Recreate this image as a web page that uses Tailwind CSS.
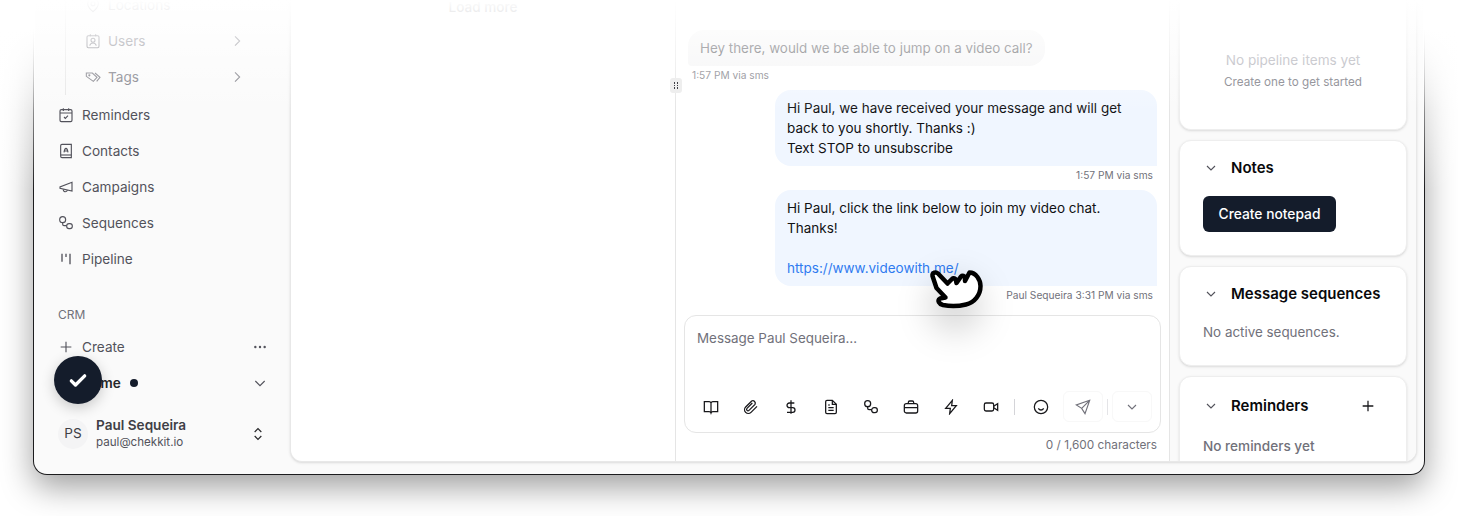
<!DOCTYPE html>
<html lang="en">
<head>
  <meta charset="UTF-8" />
  <title>Chekkit inbox</title>
  <script src="https://cdn.jsdelivr.net/npm/@tailwindcss/browser@4"></script>
</head>
<body class="bg-white">
<div class="relative h-[516px] w-[1458px] overflow-hidden bg-white font-['Inter',sans-serif] text-[13.6px]">

  <!-- app window -->
  <div class="relative ml-[33px] flex h-[475px] w-[1392px] overflow-hidden rounded-b-[14px] border border-t-0 border-[#1c1c1e] bg-[#fafafa] shadow-[0_12px_32px_rgba(0,0,0,0.38)]">

    <!-- sidebar -->
    <aside class="relative -mt-[13px] flex h-[488px] w-[256px] shrink-0 flex-col pl-[24px] pr-[22px] text-[#52525b]">
      <div class="ml-[7px] border-l border-[#e5e5e5] pl-[19px]">
        <div class="flex h-9 items-center gap-[7px] pr-[25px] text-[#71717a]">
          <svg class="size-4" viewBox="0 0 24 24" fill="none" stroke="currentColor" stroke-width="1.6"><path d="M20 10c0 5-8 12-8 12s-8-7-8-12a8 8 0 0 1 16 0Z"/><circle cx="12" cy="10" r="3"/></svg>
          <span>Locations</span>
        </div>
        <div class="flex h-9 items-center gap-[7px] pr-[23px] text-[#71717a]">
          <svg class="size-4" viewBox="0 0 24 24" fill="none" stroke="currentColor" stroke-width="1.6"><rect x="3" y="4" width="18" height="18" rx="2"/><path d="M8 2v3M16 2v3"/><circle cx="12" cy="11" r="3"/><path d="M7 19c1-3 3-4 5-4s4 1 5 4"/></svg>
          <span class="flex-1">Users</span>
          <svg class="size-4" viewBox="0 0 24 24" fill="none" stroke="currentColor" stroke-width="1.6"><path d="m9 5 7 7-7 7"/></svg>
        </div>
        <div class="flex h-9 items-center gap-[7px] pr-[23px] text-[#71717a]">
          <svg class="size-4" viewBox="0 0 24 24" fill="none" stroke="currentColor" stroke-width="1.6"><path d="M2 6h9l7 6.500-5.500 6L2 11Z"/><path d="m15 6 7.500 6.500-5 6"/><circle cx="6.500" cy="9.500" r="0.8"/></svg>
          <span class="flex-1">Tags</span>
          <svg class="size-4" viewBox="0 0 24 24" fill="none" stroke="currentColor" stroke-width="1.6"><path d="m9 5 7 7-7 7"/></svg>
        </div>
      </div>

      <nav class="mt-0.5 flex flex-col">
        <div class="flex h-9 items-center gap-2">
          <svg class="size-4" viewBox="0 0 24 24" fill="none" stroke="currentColor" stroke-width="1.7"><rect x="3" y="4" width="18" height="18" rx="2"/><path d="M8 2v4M16 2v4M3 9h18"/><path d="m9 15 2 2 4-4"/></svg>
          <span>Reminders</span>
        </div>
        <div class="flex h-9 items-center gap-2">
          <svg class="size-4" viewBox="0 0 24 24" fill="none" stroke="currentColor" stroke-width="1.7"><path d="M4 19V4a2 2 0 0 1 2-2h14v20H6a2 2 0 0 1-2-2v-1Z"/><path d="M4 18h16"/><path d="M9 14c.5-3 1.500-6 3-6s2.500 3 3 6M10 12h4"/></svg>
          <span>Contacts</span>
        </div>
        <div class="flex h-9 items-center gap-2">
          <svg class="size-4" viewBox="0 0 24 24" fill="none" stroke="currentColor" stroke-width="1.7"><path d="M21 5v13L3 14v-2Z"/><path d="M8 15.500a3 3 0 0 0 6 1"/></svg>
          <span>Campaigns</span>
        </div>
        <div class="flex h-9 items-center gap-2">
          <svg class="size-4" viewBox="0 0 24 24" fill="none" stroke="currentColor" stroke-width="1.7"><circle cx="7" cy="7" r="4.500"/><rect x="13" y="13" width="8.500" height="7.500" rx="3.500"/><path d="M7 11.500V14a2 2 0 0 0 2 2h4"/></svg>
          <span>Sequences</span>
        </div>
        <div class="flex h-9 items-center gap-2">
          <svg class="size-4" viewBox="0 0 24 24" fill="none" stroke="currentColor" stroke-width="2"><path d="M6 4v12M12 4v5M18 4v16"/></svg>
          <span>Pipeline</span>
        </div>
      </nav>

      <p class="mt-[29px] h-[18px] text-[12px] leading-[18px] text-[#71717a]">CRM</p>
      <div class="mt-[5px] flex h-9 items-center gap-2">
        <svg class="size-4" viewBox="0 0 24 24" fill="none" stroke="currentColor" stroke-width="1.7"><path d="M12 4v16M4 12h16"/></svg>
        <span class="flex-1">Create</span>
        <svg class="size-4" viewBox="0 0 24 24" fill="currentColor"><circle cx="5" cy="12" r="1.800"/><circle cx="12" cy="12" r="1.800"/><circle cx="19" cy="12" r="1.800"/></svg>
      </div>
      <div class="flex h-9 items-center gap-2">
        <span class="size-4"></span>
        <span class="font-semibold text-[#27272a]">Home</span>
        <span class="ml-[1px] size-2 rounded-full bg-[#141c2b]"></span>
        <svg class="ml-auto size-4" viewBox="0 0 24 24" fill="none" stroke="currentColor" stroke-width="1.7"><path d="m5 9 7 7 7-7"/></svg>
      </div>
      <div class="mt-[16px] flex items-center gap-2">
        <span class="flex size-[30px] items-center justify-center rounded-full bg-[#f4f4f5] text-[#3f3f46]">PS</span>
        <div class="flex-1 leading-[16px]">
          <p class="font-semibold text-[#3f3f46]">Paul Sequeira</p>
          <p class="mt-px text-[11.6px] text-[#52525b]">paul@chekkit.io</p>
        </div>
        <svg class="mr-0.5 size-4 text-[#27272a]" viewBox="0 0 24 24" fill="none" stroke="currentColor" stroke-width="1.8"><path d="m7 9 5-5 5 5M7 15l5 5 5-5"/></svg>
      </div>
    </aside>

    <!-- main panel -->
    <main class="mb-[12px] mr-[7px] flex flex-1 overflow-hidden rounded-b-xl border border-t-0 border-[#e8e8e8] bg-white shadow-sm">
      <section class="flex w-[385px] shrink-0 justify-center border-r border-[#e5e5e5] font-medium text-[#52525b]">
        <span class="h-5 -translate-y-[3px] leading-5">Load more</span>
      </section>

      <section class="relative flex w-[494px] shrink-0 flex-col border-r border-[#e5e5e5] pl-[8px] pr-[8px] pt-[30px]">
        <div class="ml-[4px] self-start rounded-2xl rounded-bl-sm bg-[#f4f4f5] px-3 py-2 text-[13.4px] leading-5 text-[#3f3f46]">Hey there, would we be able to jump on a video call?</div>
        <p class="ml-[8px] mt-[1px] h-[18px] text-[10.2px] leading-[16px] text-[#71717a]">1:57 PM via sms</p>

        <div class="mr-[4px] mt-[5px] w-[382px] self-end rounded-2xl rounded-br-none bg-[#f0f6ff] px-3 py-[8px] text-[13.5px] leading-5 text-[#111113]">Hi Paul, we have received your message and will get<br />back to you shortly. Thanks :)<br />Text STOP to unsubscribe</div>
        <p class="mr-[8px] mt-[1px] h-[18px] self-end text-[10.2px] leading-[16px] text-[#71717a]">1:57 PM via sms</p>

        <div class="mr-[4px] mt-[5px] w-[382px] self-end rounded-2xl rounded-br-none bg-[#f0f6ff] px-3 py-[8px] text-[13.5px] leading-5 text-[#111113]">Hi Paul, click the link below to join my video chat.<br />Thanks!<br /><br /><a class="text-[#2f7bf0]">https://www.videowith.me/</a></div>
        <p class="mr-[8px] mt-[1px] h-[18px] self-end text-[10.2px] leading-[16px] text-[#71717a]">Paul Sequeira 3:31 PM via sms</p>

        <!-- composer -->
        <div class="mt-[10px] flex h-[118px] w-[477px] flex-col rounded-xl border border-[#e5e5e5] bg-white">
          <p class="px-3 pt-[12px] text-[13.4px] leading-5 text-[#71717a]">Message Paul Sequeira…</p>
          <div class="mt-auto flex items-center pb-[10px] pl-[6px] text-[#18181b]">
            <span class="flex h-[30px] w-10 items-center justify-center"><svg class="size-4" viewBox="0 0 24 24" fill="none" stroke="currentColor" stroke-width="1.900"><path d="M12 6a3 3 0 0 0-3-2H2v15h7a3 3 0 0 1 3 2 3 3 0 0 1 3-2h7V4h-7a3 3 0 0 0-3 2Zm0 0v15"/></svg></span>
            <span class="flex h-[30px] w-10 items-center justify-center"><svg class="size-4" viewBox="0 0 24 24" fill="none" stroke="currentColor" stroke-width="1.900"><path d="m21 11-9 9a5.500 5.500 0 0 1-8-8l9-9a3.700 3.700 0 0 1 5 5l-9 9a1.800 1.800 0 0 1-3-3l8-8"/></svg></span>
            <span class="flex h-[30px] w-10 items-center justify-center"><svg class="size-4" viewBox="0 0 24 24" fill="none" stroke="currentColor" stroke-width="1.900"><path d="M12 2v20M17 6H9.500a3.500 3.500 0 0 0 0 7h5a3.500 3.500 0 0 1 0 7H6"/></svg></span>
            <span class="flex h-[30px] w-10 items-center justify-center"><svg class="size-4" viewBox="0 0 24 24" fill="none" stroke="currentColor" stroke-width="1.900"><path d="M14 2H6a2 2 0 0 0-2 2v16a2 2 0 0 0 2 2h12a2 2 0 0 0 2-2V8Z"/><path d="M14 2v6h6M8 13h8M8 17h8M8 9h2"/></svg></span>
            <span class="flex h-[30px] w-10 items-center justify-center"><svg class="size-4" viewBox="0 0 24 24" fill="none" stroke="currentColor" stroke-width="1.900"><circle cx="7" cy="7" r="4.500"/><rect x="13" y="13" width="8.500" height="7.500" rx="3.500"/><path d="M7 11.500V14a2 2 0 0 0 2 2h4"/></svg></span>
            <span class="flex h-[30px] w-10 items-center justify-center"><svg class="size-4" viewBox="0 0 24 24" fill="none" stroke="currentColor" stroke-width="1.900"><rect x="2" y="7" width="20" height="14" rx="3"/><path d="M8 7V5a2 2 0 0 1 2-2h4a2 2 0 0 1 2 2v2M2 13h20M12 12v2"/></svg></span>
            <span class="flex h-[30px] w-10 items-center justify-center"><svg class="size-4" viewBox="0 0 24 24" fill="none" stroke="currentColor" stroke-width="1.900"><path d="M14 2 4 14h7l-1 8 10-12h-7Z"/></svg></span>
            <span class="flex h-[30px] w-10 items-center justify-center"><svg class="size-4" viewBox="0 0 24 24" fill="none" stroke="currentColor" stroke-width="1.900"><rect x="2" y="6" width="14" height="12" rx="2.500"/><path d="m16 11 6-4v10l-6-4"/></svg></span>
            <span class="ml-[3px] h-4 w-px bg-[#d4d4d8]"></span>
            <span class="ml-[6px] flex h-[30px] w-10 items-center justify-center"><svg class="size-4" viewBox="0 0 24 24" fill="none" stroke="currentColor" stroke-width="1.900"><circle cx="12" cy="12" r="10"/><path d="M8 14s1.500 2.500 4 2.500 4-2.500 4-2.500M9 9h.01M15 9h.01"/></svg></span>
            <span class="ml-[2px] flex h-[31px] w-10 items-center justify-center rounded-md border border-[#f8f8f8] bg-white text-[#71717a]"><svg class="size-4" viewBox="0 0 24 24" fill="none" stroke="currentColor" stroke-width="1.700"><path d="M22 2 2 9l8 5 5 8ZM22 2 10 14"/></svg></span>
            <span class="ml-[4px] h-4 w-px bg-[#e4e4e7]"></span>
            <span class="ml-[4px] flex h-[31px] w-10 items-center justify-center rounded-md border border-[#f8f8f8] bg-white text-[#71717a]"><svg class="size-4" viewBox="0 0 24 24" fill="none" stroke="currentColor" stroke-width="1.700"><path d="m6 9 6 6 6-6"/></svg></span>
          </div>
        </div>
        <p class="mr-[4px] mt-[3px] self-end text-[11.8px] leading-[18px] text-[#71717a]">0 / 1,600 characters</p>

        <!-- resize handle on the divider -->
        <div class="absolute -left-[6px] top-[78px] z-10 grid h-[15px] w-[12px] grid-cols-2 content-center justify-center gap-[1px] rounded-[3px] bg-[#eeeeee] px-[3.500px]">
          <i class="size-[1.500px] bg-[#3f3f46]"></i><i class="size-[1.500px] bg-[#3f3f46]"></i><i class="size-[1.500px] bg-[#3f3f46]"></i><i class="size-[1.500px] bg-[#3f3f46]"></i><i class="size-[1.500px] bg-[#3f3f46]"></i><i class="size-[1.500px] bg-[#3f3f46]"></i>
        </div>
      </section>

      <!-- right rail -->
      <section class="flex flex-1 flex-col gap-[10px] overflow-hidden bg-[#fafafa] px-[9px]">
        <div class="h-[130px] shrink-0 rounded-b-xl border border-t-0 border-[#eeeeee] bg-white pt-[50px] text-center shadow-sm">
          <p class="leading-5 text-[#a1a1aa]">No pipeline items yet</p>
          <p class="mt-[2px] text-[11.7px] leading-5 text-[#71717a]">Create one to get started</p>
        </div>
        <div class="shrink-0 rounded-xl border border-[#eeeeee] bg-white pb-[23px] pl-[23px] pr-[23px] pt-[15px] shadow-sm">
          <div class="flex h-6 items-center gap-[12px] text-[15px] font-semibold text-[#09090b]">
            <svg class="size-4 text-[#52525b]" viewBox="0 0 24 24" fill="none" stroke="currentColor" stroke-width="1.700"><path d="m6 9 6 6 6-6"/></svg>
            <span>Notes</span>
          </div>
          <button class="mt-4 block h-9 w-[133px] rounded-md bg-[#141c2b] text-[13.8px] font-medium text-white">Create notepad</button>
        </div>
        <div class="shrink-0 rounded-xl border border-[#eeeeee] bg-white pb-[23px] pl-[23px] pr-[23px] pt-[15px] shadow-sm">
          <div class="flex h-6 items-center gap-[12px] whitespace-nowrap text-[15px] font-semibold text-[#09090b]">
            <svg class="size-4 text-[#52525b]" viewBox="0 0 24 24" fill="none" stroke="currentColor" stroke-width="1.700"><path d="m6 9 6 6 6-6"/></svg>
            <span>Message sequences</span>
          </div>
          <p class="mt-4 text-[13.4px] leading-5 text-[#71717a]">No active sequences.</p>
        </div>
        <div class="h-[120px] shrink-0 rounded-xl border border-[#eeeeee] bg-white pl-[23px] pr-[23px] pt-[15px] shadow-sm">
          <div class="flex h-7 items-center gap-[12px] text-[15px] font-semibold text-[#09090b]">
            <svg class="size-4 text-[#52525b]" viewBox="0 0 24 24" fill="none" stroke="currentColor" stroke-width="1.700"><path d="m6 9 6 6 6-6"/></svg>
            <span class="flex-1">Reminders</span>
            <svg class="mr-[7px] size-4 text-[#18181b]" viewBox="0 0 24 24" fill="none" stroke="currentColor" stroke-width="1.900"><path d="M12 4v16M4 12h16"/></svg>
          </div>
          <p class="mt-4 font-medium leading-5 text-[#71717a]">No reminders yet</p>
        </div>
      </section>
    </main>
  </div>

  <!-- fade over the top of the window, the frame edges fade further down -->
  <div class="pointer-events-none absolute inset-x-0 top-0 h-[112px] bg-gradient-to-b from-white to-transparent"></div>
  <div class="pointer-events-none absolute left-0 top-0 h-[190px] w-[35px] bg-gradient-to-b from-white from-[15%] to-transparent"></div>
  <div class="pointer-events-none absolute right-0 top-0 h-[190px] w-[35px] bg-gradient-to-b from-white from-[15%] to-transparent"></div>

  <!-- floating check button -->
  <div class="absolute left-[54px] top-[356px] flex size-12 items-center justify-center rounded-full bg-[#141c2b] shadow-[0_4px_14px_rgba(0,0,0,0.2)]">
    <svg class="size-5 text-white" viewBox="0 0 24 24" fill="none" stroke="currentColor" stroke-width="4" stroke-linecap="round" stroke-linejoin="round"><path d="m4 13 5 5L20 7"/></svg>
  </div>

  <!-- hand cursor -->
  <div class="absolute left-[928px] top-[278px] size-[55px] rounded-full bg-black/15 blur-lg"></div>
  <svg class="absolute left-[920px] top-[255px] h-[60px] w-[70px]" viewBox="0 0 70 60" fill="#fff" stroke="#000" stroke-width="4.500" stroke-linejoin="round" stroke-linecap="round">
    <path d="M12.500 21C12 17.500 16 16.500 18 18.500L27.500 28.500 32 24C33.500 22.500 35.500 23.500 36 25.500L36.500 28 41 21.500C42.500 20 44.500 21 45 23L45 26 49.500 17.500C56 17.500 60.500 25 60.500 31 60.500 40 54.500 47.500 46 49.500 40 51 30 51.500 23 50 19 49 17 45.500 20 43.500L25.500 42.500 16.500 33Z"/>
  </svg>
</div>
</body>
</html>
